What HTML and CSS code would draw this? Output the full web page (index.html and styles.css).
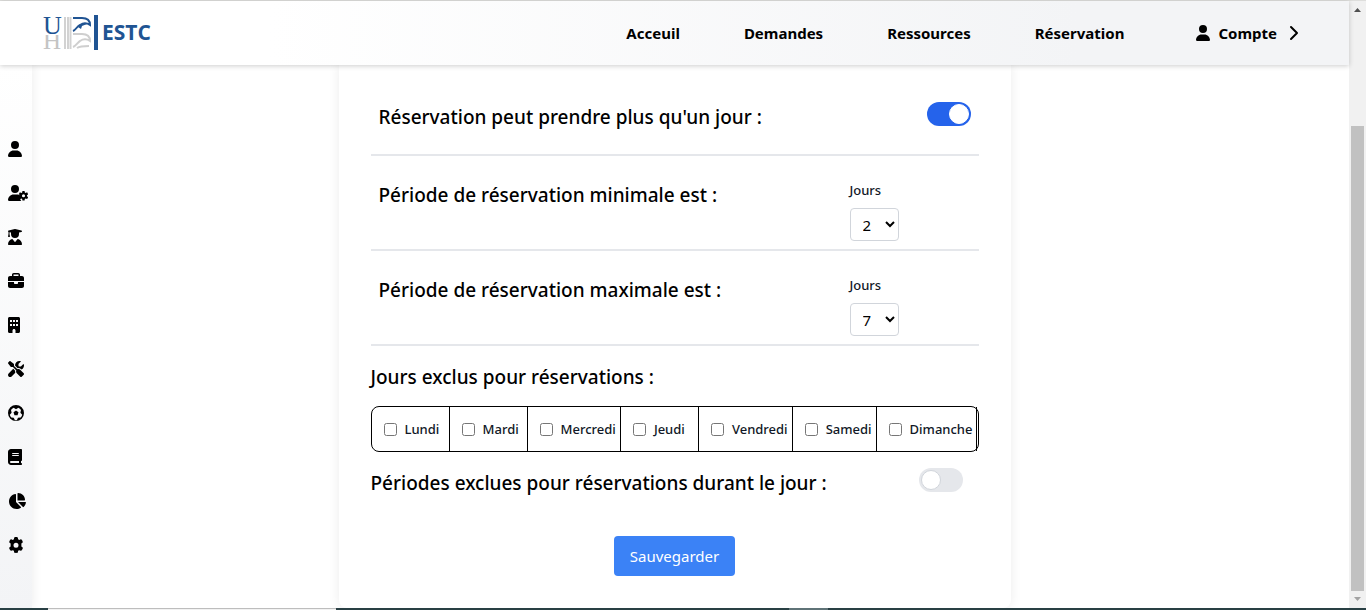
FILE: index.html
```
<!DOCTYPE html>
<html lang="fr">
<head>
<meta charset="utf-8">
<meta name="viewport" content="width=device-width, initial-scale=1">
<title>ESTC - Réservation</title>
<link rel="stylesheet" href="styles.css">
</head>
<body>
<div class="window">
  <div class="page">
    <header class="header">
      <a class="logo" href="#" aria-label="ESTC">
        <svg width="108" height="36" viewBox="0 0 108 36">
          <text class="logo-serif logo-gray" x="0" y="34" font-size="25">H</text>
          <rect x="0" y="0" width="20" height="20" fill="#fff"/>
          <text class="logo-serif logo-blue" x="0" y="19" font-size="26">U</text>
          <path d="M22 2v32M25 2v32" stroke="#d2d2d2" stroke-width="2"/>
          <path d="M27.500 2v32" stroke="#d2d2d2" stroke-width="2"/>
          <path d="M30 3h9c5 0 8 2 8 7-3-2-7-2-10 0-3 1-4 5-7 6" fill="none" stroke="#205493" stroke-width="2"/>
          <path d="M35 12l3-3 6 0-5 2-1 3z" fill="#205493"/>
          <path d="M30 19h9c5 0 8 2 8 7-3-2-7-2-10 0-2 1-4 5-7 6M34 33c3-2 6-2 12-2" fill="none" stroke="#cfcfcf" stroke-width="2"/>
          <rect x="51" y="0" width="4" height="35" fill="#205493"/>
          <text class="logo-word logo-blue" x="59" y="25" font-size="21">ESTC</text>
        </svg>
      </a>
      <nav class="nav">
        <a href="#">Acceuil</a>
        <a href="#">Demandes</a>
        <a href="#">Ressources</a>
        <a href="#">Réservation</a>
        <button class="account" type="button">
          <svg width="14" height="16" viewBox="0 0 448 512" fill="currentColor"><path d="M224 256A128 128 0 1 0 224 0a128 128 0 1 0 0 256zm-45.700 48C79.800 304 0 383.800 0 482.300 0 498.700 13.300 512 29.700 512h388.600c16.400 0 29.700-13.300 29.700-29.700C448 383.800 368.200 304 269.700 304z"/></svg>
          <span>Compte</span>
          <svg class="chevron" width="10" height="16" viewBox="0 0 10 16" fill="none" stroke="currentColor" stroke-width="2" stroke-linecap="round" stroke-linejoin="round"><path d="M2 2l6 6-6 6"/></svg>
        </button>
      </nav>
    </header>
    <div class="body">
      <aside class="sidebar">
        <a href="#" aria-label="Profil"><svg width="14" height="16" viewBox="0 0 448 512"><path d="M224 256A128 128 0 1 0 224 0a128 128 0 1 0 0 256zm-45.700 48C79.800 304 0 383.800 0 482.300 0 498.700 13.300 512 29.700 512h388.600c16.400 0 29.700-13.300 29.700-29.700C448 383.800 368.200 304 269.700 304z"/></svg></a>
        <a href="#" aria-label="Gestion des utilisateurs"><svg width="20" height="16" viewBox="0 0 640 512"><path d="M224 256A128 128 0 1 0 224 0a128 128 0 1 0 0 256zm-45.700 48C79.800 304 0 383.800 0 482.300 0 498.700 13.300 512 29.700 512h388.600c3 0 6-.5 9-1.500-8-10-30-35-35-55 15-15 15-35 0-60 5-20 10-35 20-51C377 318 330 304 269.700 304z"/><path fill-rule="evenodd" d="M462 190h68l9 50 23 13 50-18 34 60-40 34v27l40 34-34 60-50-18-23 13-9 50h-68l-9-50-23-13-50 18-34-60 40-34v-27l-40-34 34-60 50 18 23-13zM496 292a50 50 0 1 0 0 100 50 50 0 1 0 0-100z"/></svg></a>
        <a href="#" aria-label="Étudiants"><svg width="14" height="16" viewBox="0 0 448 512"><path d="M219 1a25 25 0 0 1 10 0l200 48c11 3 19 12 19 23s-8 20-19 23l-77 18v47a128 128 0 1 1-256 0v-47l-48-11v56l15 78c2 10-4 20-15 20H16c-10 0-17-10-15-20l15-78V93C7 90 0 81 0 72c0-11 8-20 19-23zM129 323c6-2 13 1 17 6l66 80c6 8 18 8 24 0l66-80c4-5 11-8 17-6 75 20 129 87 129 168 0 11-9 21-21 21H21c-12 0-21-10-21-21 0-81 54-148 129-168z"/></svg></a>
        <a href="#" aria-label="Services"><svg width="16" height="16" viewBox="0 0 512 512"><path fill-rule="evenodd" d="M184 48h144c4 0 8 4 8 8v40H176V56c0-4 4-8 8-8zm-56 8v40H64c-35 0-64 29-64 64v96h512v-96c0-35-29-64-64-64h-64V56c0-31-25-56-56-56H184c-31 0-56 25-56 56zM512 288H320v32c0 18-14 32-32 32h-64c-18 0-32-14-32-32v-32H0v128c0 35 29 64 64 64h384c35 0 64-29 64-64z"/></svg></a>
        <a href="#" aria-label="Bâtiments"><svg width="12" height="16" viewBox="0 0 384 512"><path fill-rule="evenodd" d="M48 0C22 0 0 22 0 48v416c0 26 22 48 48 48h96v-80c0-26 22-48 48-48s48 22 48 48v80h96c26 0 48-22 48-48V48c0-26-22-48-48-48zM64 96h64v64H64zm96 0h64v64h-64zm96 0h64v64h-64zM64 224h64v64H64zm96 0h64v64h-64zm96 0h64v64h-64z"/></svg></a>
        <a href="#" aria-label="Matériel"><svg width="16" height="16" viewBox="0 0 512 512"><path d="M78.600 5c-9.500-7.400-23-6.500-31.600 2L7 47c-8.500 8.500-9.400 22-2.100 31.600l80 104c4.500 5.900 11.600 9.400 19 9.400h54.100l109 109c-14.700 29-10 65.400 14.300 89.600l112 112c12.500 12.500 32.800 12.500 45.300 0l64-64c12.500-12.500 12.500-32.800 0-45.300l-112-112c-24.200-24.200-60.600-29-89.600-14.300L192 158v-54c0-7.500-3.500-14.500-9.400-19zM19.900 396.100C7.200 408.800 0 426.100 0 444.100 0 481.600 30.400 512 67.900 512c18 0 35.300-7.200 48-19.900l117.800-117.800c-7.800-20.900-9-43.600-3.600-65.100l-61.700-61.700zM512 144c0-10.500-1.100-20.700-3.200-30.500-2.400-11.200-16.100-14.100-24.200-6l-63.900 63.900c-3 3-7.100 4.700-11.300 4.700H352c-8.800 0-16-7.200-16-16v-57.500c0-4.200 1.700-8.300 4.700-11.300l63.900-63.900c8.100-8.100 5.200-21.800-6-24.200C388.700 1.100 378.500 0 368 0 288.500 0 224 64.500 224 144v.8l85.300 85.300c36-9.100 75.800.5 104 28.700l15.700 15.700c49-23 83-72.800 83-130.500z"/></svg></a>
        <a href="#" aria-label="Sports"><svg width="16" height="16" viewBox="0 0 512 512"><path fill-rule="evenodd" d="M256 0a256 256 0 1 0 0 512 256 256 0 1 0 0-512zM180 88l76 45 76-45c34 15 63 42 84 75l-20 86 58 66c-9 32-25 60-47 83l-88 7-35 81c-20 4-45 4-60 0l-43-81-76-7c-22-23-40-51-47-83l58-66-20-86c21-33 50-60 84-75z"/><path d="M256 172l80 58-30 94H206l-30-94z"/></svg></a>
        <a href="#" aria-label="Documents"><svg width="14" height="16" viewBox="0 0 448 512"><path fill-rule="evenodd" d="M96 0C43 0 0 43 0 96v320c0 53 43 96 96 96h320c18 0 32-14 32-32s-14-32-32-32v-64c18 0 32-14 32-32V32c0-18-14-32-32-32zm0 384h256v64H96c-42 0-42-64 0-64zm48-256h192c20 0 20 32 0 32H144c-20 0-20-32 0-32zm0 64h192c20 0 20 32 0 32H144c-20 0-20-32 0-32z"/></svg></a>
        <a href="#" aria-label="Statistiques"><svg width="18" height="16" viewBox="0 0 576 512"><path d="M304 240V17c0-9 7-17 16-17 124 0 224 100 224 224 0 9-8 16-17 16zM32 272c0-121 90-222 207-238 9-1 17 6 17 16v238l157 157c7 7 6 18-1 23-39 28-87 44-140 44C140 512 32 405 32 272zm527 16c9 0 16 8 15 17-8 56-35 106-74 143-6 6-16 5-22-1L320 288z"/></svg></a>
        <a href="#" aria-label="Paramètres"><svg width="16" height="16" viewBox="0 0 512 512"><path fill-rule="evenodd" d="M211 5c30-7 60-7 90 0 8 2 12 8 14 15l9 52 35 20 50-18c8-3 15-1 21 5 20 22 35 48 44 77 2 8 0 15-6 20l-40 35v90l40 35c6 5 8 12 6 20-9 29-24 55-44 77-6 6-13 8-21 5l-50-18-35 20-9 52c-2 7-6 13-14 15-30 7-60 7-90 0-8-2-12-8-14-15l-9-52-35-20-50 18c-8 3-15 1-21-5-20-22-35-48-44-77-2-8 0-15 6-20l40-35v-90l-40-35c-6-5-8-12-6-20 9-29 24-55 44-77 6-6 13-8 21-5l50 18 35-20 9-52c2-7 6-13 14-15zM256 182a80 80 0 1 0 0 160 80 80 0 1 0 0-160z"/></svg></a>
      </aside>
      <main class="main">
        <form class="card">
          <div class="row row-toggle">
            <label class="title" for="multi">Réservation peut prendre plus qu'un jour :</label>
            <input class="switch" id="multi" type="checkbox" role="switch" checked>
          </div>
          <div class="row row-period">
            <span class="title">Période de réservation minimale est :</span>
            <div class="field">
              <label for="min">Jours</label>
              <select id="min"><option>1</option><option selected>2</option><option>3</option><option>7</option></select>
            </div>
          </div>
          <div class="row row-period">
            <span class="title">Période de réservation maximale est :</span>
            <div class="field">
              <label for="max">Jours</label>
              <select id="max"><option>1</option><option>2</option><option>3</option><option selected>7</option></select>
            </div>
          </div>
          <h3 class="title section">Jours exclus pour réservations :</h3>
          <ul class="days">
            <li><input type="checkbox" id="d1"><label for="d1">Lundi</label></li>
            <li><input type="checkbox" id="d2"><label for="d2">Mardi</label></li>
            <li><input type="checkbox" id="d3"><label for="d3">Mercredi</label></li>
            <li><input type="checkbox" id="d4"><label for="d4">Jeudi</label></li>
            <li><input type="checkbox" id="d5"><label for="d5">Vendredi</label></li>
            <li><input type="checkbox" id="d6"><label for="d6">Samedi</label></li>
            <li><input type="checkbox" id="d7"><label for="d7">Dimanche</label></li>
          </ul>
          <div class="excluded">
            <label class="title" for="periods">Périodes exclues pour réservations durant le jour :</label>
            <input class="switch" id="periods" type="checkbox" role="switch">
          </div>
          <button class="save" type="button">Sauvegarder</button>
        </form>
      </main>
    </div>
  </div>
  <div class="scrollbar" aria-hidden="true">
    <svg width="7" height="4" viewBox="0 0 7 4" fill="#505050"><path d="M0 4L3.500 0 7 4z"/></svg>
    <div class="thumb"></div>
    <svg width="7" height="4" viewBox="0 0 7 4" fill="#a3a3a3"><path d="M0 0h7L3.500 4z"/></svg>
  </div>
</div>
<div class="taskbar" aria-hidden="true"><div class="search"></div><div class="active-app"></div></div>
</body>
</html>
```
FILE: styles.css
```
*, ::before { box-sizing: border-box; }

body {
  margin: 0;
  min-height: 100vh;
  display: flex;
  flex-direction: column;
  font-family: "Noto Sans", "Open Sans", sans-serif;
  font-size: 16px;
  line-height: 24px;
  color: #000;
  background: #fff;
}

a { color: inherit; text-decoration: none; }

.window {
  flex: 1;
  display: flex;
  border-top: 1px solid #dededc;
}

.page {
  flex: 1;
  min-width: 0;
  display: flex;
  flex-direction: column;
}

.header {
  position: relative;
  z-index: 1;
  display: flex;
  align-items: center;
  justify-content: space-between;
  min-height: 64px;
  padding: 0 50px 0 43px;
  background: linear-gradient(to right, #fff 0%, #fff 20%, #f3f4f6 80%);
  box-shadow: 0 1px 5px rgba(0, 0, 0, 0.2);
}

.logo svg { display: block; }
.logo-serif { font-family: "Liberation Serif", serif; }
.logo-word { font-family: "Open Sans", sans-serif; font-weight: 700; }
.logo-blue { fill: #205493; }
.logo-gray { fill: #c4c4c4; }

.nav {
  display: flex;
  align-items: center;
  gap: 64px;
  font-size: 15px;
  font-weight: 700;
}

.account {
  display: flex;
  align-items: center;
  gap: 8px;
  margin-left: 8px;
  padding: 0;
  border: 0;
  background: none;
  color: inherit;
  font: inherit;
}

.chevron { margin-left: 4px; }

.body { flex: 1; display: flex; }

.sidebar {
  display: flex;
  flex-direction: column;
  gap: 28px;
  width: 32px;
  padding: 76px 0 0 8px;
  background: linear-gradient(to bottom, #fff, #f3f4f6);
  box-shadow: 2px 0 10px rgba(0, 0, 0, 0.06);
}

.sidebar a { height: 16px; }
.sidebar svg { display: block; }

.main { flex: 1; display: flex; justify-content: center; padding-right: 32px; }

.card {
  width: 672px;
  padding: 0 32px 32px;
  border-radius: 0 0 8px 8px;
  background: #fff;
  box-shadow: 0 0 12px rgba(0, 0, 0, 0.08);
}

.title {
  margin: 0;
  font-size: 19px;
  font-weight: 500;
  line-height: 30px;
}

.row {
  display: flex;
  align-items: flex-start;
  justify-content: space-between;
  border-bottom: 2px solid #e5e7eb;
}

.row-toggle { padding: 37px 8px 22px; }
.row-period { padding: 24px 0 8px 8px; }

.switch {
  appearance: none;
  flex: none;
  width: 44px;
  height: 24px;
  margin: 0;
  padding: 2px;
  border-radius: 12px;
  background: #e5e7eb;
}

.switch::before {
  content: "";
  display: block;
  width: 20px;
  height: 20px;
  border: 1px solid #d1d5db;
  border-radius: 50%;
  background: #fff;
}

.switch:checked { background: #2563eb; }
.switch:checked::before { margin-left: auto; border-color: #fff; }

.field {
  display: flex;
  flex-direction: column;
  align-items: flex-start;
  gap: 8px;
  width: 129px;
}

.field label, .days label {
  font-size: 13px;
  font-weight: 500;
  line-height: 20px;
  color: #111827;
}

select {
  height: 33px;
  padding: 0 0 0 8px;
  border: 1px solid #d1d5db;
  border-radius: 4px;
  width: 49px;
  background: #fff;
  color: #000;
  font-family: inherit;
  font-size: 15px;
}

.section { margin-top: 16px; }

.days {
  display: flex;
  margin: 14px 0 16px;
  padding: 0;
  border: 1px solid #000;
  border-radius: 8px;
  list-style: none;
}

.days li {
  flex: 1 1 0;
  display: flex;
  align-items: center;
  gap: 8px;
  padding: 12px 4px 12px 12px;
  border-right: 1px solid #000;
}

.days input { flex: none; width: 13px; height: 13px; margin: 0; }

.excluded {
  display: flex;
  align-items: flex-start;
  justify-content: space-between;
  padding-right: 16px;
}

.save {
  display: block;
  margin: 38px auto 0;
  padding: 8px 16px;
  border: 0;
  border-radius: 4px;
  background: #3b82f6;
  color: #fff;
  font-family: inherit;
  font-size: 15px;
  line-height: 24px;
}

.scrollbar {
  display: flex;
  flex-direction: column;
  align-items: center;
  width: 17px;
  padding: 7px 0;
  background: #f1f1f1;
}

.thumb {
  flex: 1;
  width: 13px;
  margin: 114px 0 6px;
  background: #c1c1c1;
}

.taskbar {
  display: flex;
  height: 2px;
  padding-left: 48px;
  background: #294044;
}

.search {
  width: 288px;
  border-top: 1px solid #bdbdbd;
  background: #f2f2f2;
}

.active-app { width: 39px; margin-left: 453px; background: #5f7377; }
```
